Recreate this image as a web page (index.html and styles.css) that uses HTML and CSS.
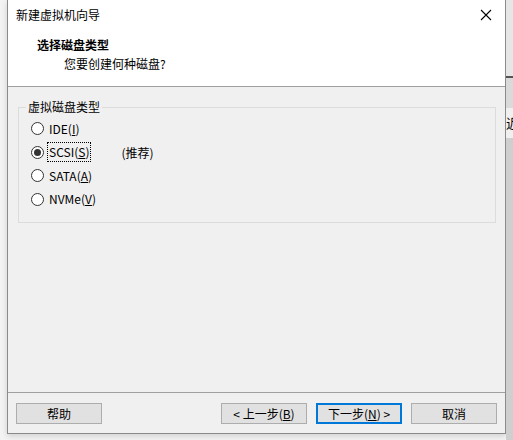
FILE: index.html
```html
<!DOCTYPE html>
<html lang="zh-CN">
<head>
    <meta charset="UTF-8">
    <title>新建虚拟机向导</title>
    <link rel="stylesheet" href="styles.css">
</head>
<body>
    <div class="desk">
        <div class="window">
            <div class="titlebar">
                <span class="title">新建虚拟机向导</span>
                <span class="close">
                    <svg width="12" height="12" viewBox="0 0 12 12"><path d="M1 1L11 11M11 1L1 11" stroke="#000" stroke-width="1.1" fill="none"/></svg>
                </span>
            </div>
            <div class="header">
                <div class="head-title">选择磁盘类型</div>
                <div class="head-sub">您要创建何种磁盘?</div>
            </div>
            <div class="content">
                <fieldset class="group">
                    <legend>虚拟磁盘类型</legend>
                    <div class="radio"><span class="dot"></span><span class="label">IDE(<u>I</u>)</span></div>
                    <div class="radio checked"><span class="dot"></span><span class="label focus">SCSI(<u>S</u>)</span><span class="hint">(推荐)</span></div>
                    <div class="radio"><span class="dot"></span><span class="label">SATA(<u>A</u>)</span></div>
                    <div class="radio"><span class="dot"></span><span class="label">NVMe(<u>V</u>)</span></div>
                </fieldset>
            </div>
            <div class="footer">
                <button class="btn">帮助</button>
                <span class="spacer"></span>
                <button class="btn">&lt; 上一步(<u>B</u>)</button>
                <button class="btn default">下一步(<u>N</u>) &gt;</button>
                <button class="btn">取消</button>
            </div>
        </div>
        <div class="side">
            <div class="side-top"></div>
            <div class="side-mark"></div>
            <div class="side-text">近</div>
            <div class="side-rest"></div>
        </div>
    </div>
</body>
</html>
```

FILE: styles.css
```css
html, body {
    margin: 0;
    padding: 0;
}
body {
    width: 513px;
    height: 440px;
    overflow: hidden;
    background: #f3f3f3;
    font-family: "Noto Sans CJK SC", "Microsoft YaHei", sans-serif;
    font-size: 12px;
    color: #000;
}
.desk {
    display: flex;
    height: 440px;
}
.window {
    margin-left: 7px;
    width: 497px;
    height: 433px;
    border: 1px solid #8a8a8a;
    border-top: none;
    background: #f0f0f0;
    display: flex;
    flex-direction: column;
    box-shadow: 0 2px 6px rgba(0, 0, 0, 0.15);
}
.titlebar {
    height: 30px;
    background: #fff;
    display: flex;
    align-items: center;
    padding-left: 8px;
}
.title {
    flex: 1;
    line-height: 30px;
}
.close {
    width: 30px;
    display: flex;
    justify-content: center;
    padding-right: 4px;
}
.header {
    height: 56px;
    background: #fff;
    border-bottom: 1px solid #a0a0a0;
    padding-left: 29px;
}
.head-title {
    font-weight: bold;
    padding-top: 6px;
    line-height: 18px;
}
.head-sub {
    padding-left: 27px;
    line-height: 20px;
}
.content {
    flex: 1;
    padding: 12px 10px 0 10px;
}
.group {
    margin: 0;
    height: 124px;
    box-sizing: border-box;
    border: 1px solid #dcdcdc;
    padding: 2px 0 0 12px;
    width: 478px;
}
.group legend {
    padding: 0 2px;
    margin-left: -5px;
    line-height: 16px;
}
.radio {
    display: flex;
    align-items: center;
    height: 23.5px;
}
.dot {
    width: 11px;
    height: 11px;
    border: 1px solid #333;
    border-radius: 50%;
    background: #fff;
    margin-right: 3px;
    display: flex;
    align-items: center;
    justify-content: center;
}
.checked .dot::after {
    content: "";
    width: 7px;
    height: 7px;
    border-radius: 50%;
    background: #333;
}
.label {
    padding: 0 1px;
    line-height: 18px;
    border: 1px dotted transparent;
}
.label.focus {
    border-color: #000;
}
.hint {
    margin-left: 30px;
}
.footer {
    height: 41px;
    box-sizing: border-box;
    border-top: 1px solid #a0a0a0;
    display: flex;
    align-items: flex-start;
    padding: 10px 8px 0 8px;
    gap: 9px;
}
.spacer {
    flex: 1;
}
.btn {
    width: 86px;
    height: 21px;
    background: #e1e1e1;
    border: 1px solid #adadad;
    font-family: inherit;
    font-size: 12px;
    padding: 0;
    color: #000;
}
.btn.default {
    border: 2px solid #0078d7;
}
.side {
    width: 7px;
    display: flex;
    flex-direction: column;
    background: #bdbdbd;
    overflow: hidden;
}
.side-top {
    height: 76px;
    background: #e6e6e6;
}
.side-mark {
    height: 30px;
    background: #dadada;
    border-top: 2px solid #555;
}
.side-text {
    height: 30px;
    background: #f0f0f0;
    font-size: 13px;
    line-height: 30px;
    white-space: nowrap;
}
.side-rest {
    flex: 1;
    background: #cfcfcf;
}
```
